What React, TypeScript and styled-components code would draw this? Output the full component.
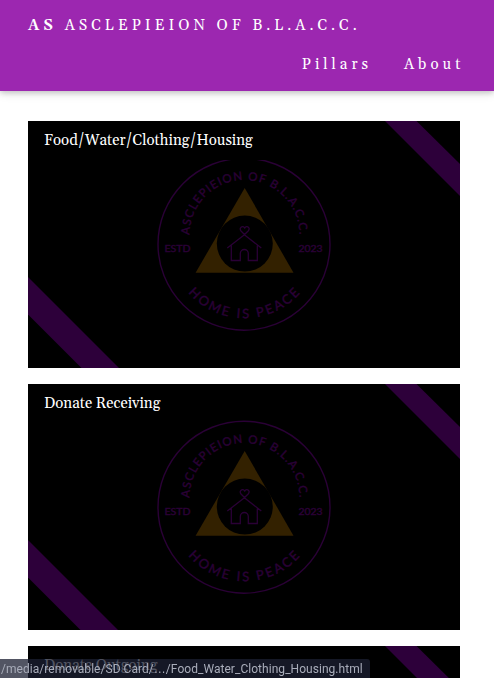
import React, { useId } from "react";
import styled, { createGlobalStyle } from "styled-components";

const GlobalStyle = createGlobalStyle`
  * { box-sizing: border-box; }
  html, body { margin: 0; height: 100%; overflow: hidden; background: #fff; }
  body { font-family: Georgia, Gelasio, "Liberation Serif", serif; font-size: 15px; color: #fff; }
`;

const Page = styled.div`
  height: 100vh;
  overflow: hidden;
`;

const Header = styled.header`
  display: flex;
  flex-direction: column;
  height: 91px;
  padding: 6px 28px 0;
  background: #9c27b0;
  letter-spacing: 4px;
  box-shadow: 0 2px 5px rgba(0, 0, 0, 0.16), 0 2px 10px rgba(0, 0, 0, 0.12);
`;

const Brand = styled.a`
  line-height: 39px;
  white-space: nowrap;
`;

const Nav = styled.nav`
  display: flex;
  justify-content: flex-end;
  gap: 32px;
  margin-right: 1.6px;
  line-height: 39px;
`;

const NavLink = styled.a`
  white-space: nowrap;
`;

const Gallery = styled.main`
  display: flex;
  flex-direction: column;
  gap: 16px;
  width: 432px;
  margin: 30px 0 0 28px;
`;

const Card = styled.article`
  display: grid;
  flex: none;
  height: 246.6px;
  background: #000;
  overflow: hidden;
`;

const Artwork = styled.svg`
  grid-area: 1 / 1;
  display: block;
  width: 432px;
  height: 247px;
`;

const Title = styled.h2<{ $opaque?: boolean }>`
  grid-area: 1 / 1;
  align-self: start;
  justify-self: start;
  z-index: 1;
  margin: 0;
  height: 39px;
  padding: 0 16px;
  font-size: 15px;
  font-weight: 400;
  line-height: 40px;
  width: ${(p) => (p.$opaque ? "240px" : "auto")};
  background: ${(p) => (p.$opaque ? "#000" : "transparent")};
`;

const StatusBar = styled.div`
  position: fixed;
  left: 0;
  bottom: 0;
  z-index: 5;
  width: 370px;
  height: 19px;
  padding-left: 1px;
  border-radius: 0 3px 0 0;
  background: rgba(28, 32, 50, 0.76);
  color: #a9adba;
  font: 12px/20px Roboto, sans-serif;
  letter-spacing: 0.04px;
  white-space: nowrap;
`;

const Ellipsis = styled.span`
  font-family: "Liberation Sans", sans-serif;
  line-height: 1;
`;

function Emblem() {
  const id = useId();
  return (
    <Artwork viewBox="0 0 432 247">
      <g fill="#2d003a">
        <path d="M357 0H388.5L432 43V75Z" />
        <path d="M0 156L91 247H53.5L0 193.5Z" />
      </g>
      <circle cx="216" cy="123.2" r="86" fill="none" stroke="#2a0036" strokeWidth="1.4" />
      <path d="M216.7 67L265.5 151.7H167.6Z" fill="#332100" />
      <circle cx="216.8" cy="122.6" r="28" fill="#000" />
      <g fill="none" stroke="#2a0036" strokeWidth="1.3">
        <path d="M199.3 127L216.4 113.8L233.3 127M203.3 124.5V139.5H212.3V132.5a4 4 0 0 1 8 0V139.5H229.3V124.5" />
        <path d="M216.5 113.5L213 110C210.5 107 214.5 103.8 216.7 107C219 103.8 223 107 220.2 110Z" />
      </g>
      <path id={id + "t"} d="M161.5 114A55 55 0 0 1 271.5 114" fill="none" />
      <path id={id + "b"} d="M160.3 171.8A74.5 74.5 0 0 0 272.5 171.8" fill="none" />
      <g fill="#2a0036" stroke="#2a0036" strokeWidth="0.4" fontFamily="Lato, sans-serif">
        <text fontSize="11.5" textLength="172">
          <textPath href={"#" + id + "t"} textLength="172">ASCLEPIEION OF B.L.A.C.C.</textPath>
        </text>
        <text fontSize="13" textLength="126">
          <textPath href={"#" + id + "b"} textLength="126">HOME IS PEACE</textPath>
        </text>
        <text x="136.5" y="131" fontSize="8.5" textLength="26" lengthAdjust="spacingAndGlyphs">ESTD</text>
        <text x="270.5" y="131" fontSize="8.5" textLength="24" lengthAdjust="spacingAndGlyphs">2023</text>
      </g>
    </Artwork>
  );
}

const pillars = ["Food/Water/Clothing/Housing", "Donate Receiving", "Donate Outgoing"];

export default function App() {
  return (
    <Page>
      <GlobalStyle />
      <Header>
        <Brand><b>AS</b> ASCLEPIEION OF B.L.A.C.C.</Brand>
        <Nav>
          <NavLink>Pillars</NavLink>
          <NavLink>About</NavLink>
        </Nav>
      </Header>
      <Gallery>
        {pillars.map((name, i) => (
          <Card key={name}>
            <Emblem />
            <Title $opaque={i === 0}>{name}</Title>
          </Card>
        ))}
      </Gallery>
      <StatusBar>/media/removable/SD Card/<Ellipsis>…</Ellipsis>/Food_Water_Clothing_Housing.html</StatusBar>
    </Page>
  );
}
